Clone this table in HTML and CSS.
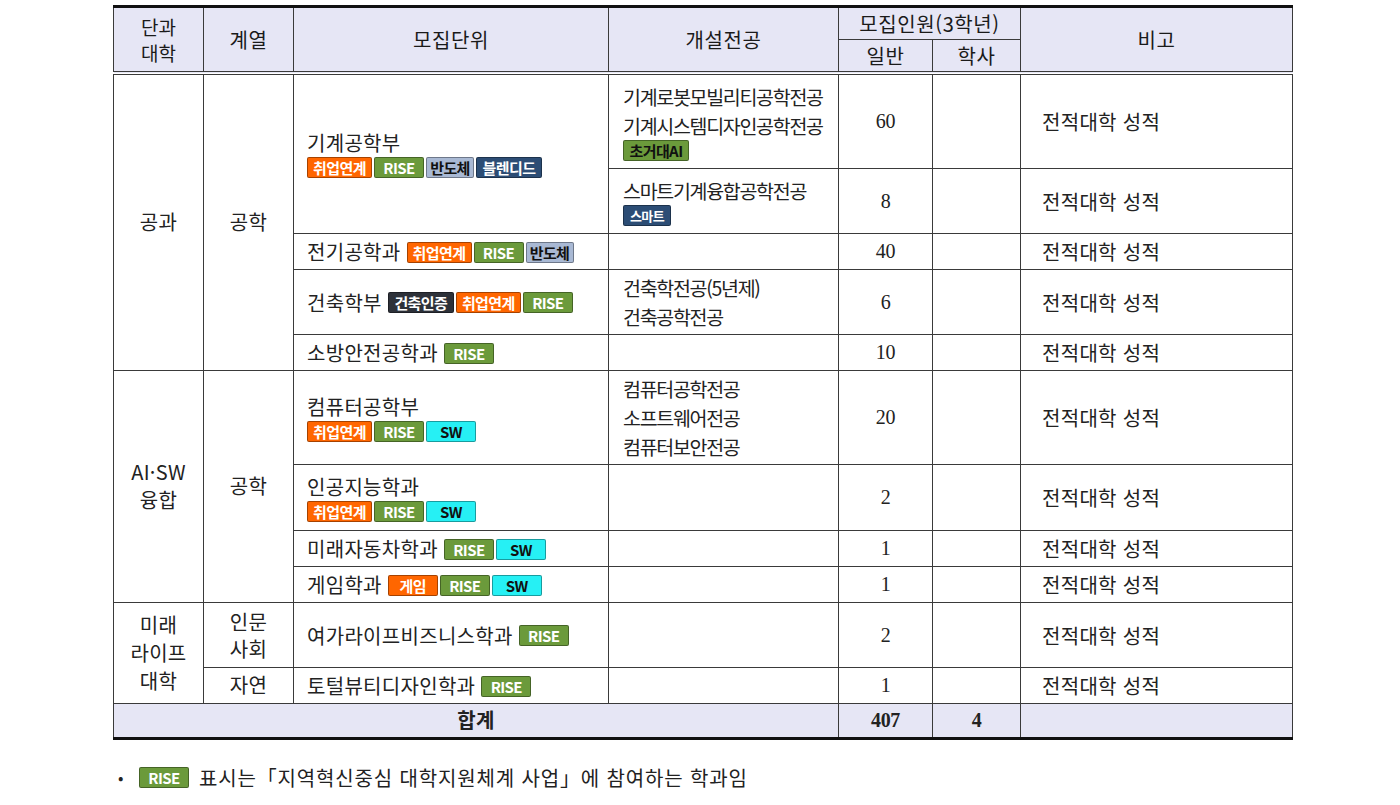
FILE: index.html
```html
<!DOCTYPE html>
<html lang="ko">
<head>
<meta charset="utf-8">
<title>모집단위</title>
<link rel="stylesheet" href="styles.css">
</head>
<body>
<div class="page">
<table class="grid">
  <colgroup>
    <col class="c-col"><col class="c-track"><col class="c-unit"><col class="c-major"><col class="c-gen"><col class="c-bach"><col class="c-note">
  </colgroup>
  <thead>
    <tr class="hr1">
      <th rowspan="2" class="two"><span class="ln">단과</span><span class="ln">대학</span></th>
      <th rowspan="2">계열</th>
      <th rowspan="2">모집단위</th>
      <th rowspan="2">개설전공</th>
      <th colspan="2" class="sub">모집인원(3학년)</th>
      <th rowspan="2">비고</th>
    </tr>
    <tr class="hr2">
      <th class="sub">일반</th>
      <th class="sub">학사</th>
    </tr>
  </thead>
  <tbody>
    <tr class="r95">
      <td rowspan="5">공과</td>
      <td rowspan="5">공학</td>
      <td rowspan="2" class="unit">
        <div class="name">기계공학부</div>
        <div class="badges"><span class="b orange w65">취업연계</span><span class="b green w50">RISE</span><span class="b gray w48">반도체</span><span class="b navy w66">블렌디드</span></div>
      </td>
      <td class="major">기계로봇모빌리티공학전공<br>기계시스템디자인공학전공
        <div class="badges"><span class="b green dark-text w66">초거대AI</span></div>
      </td>
      <td class="num">60</td>
      <td></td>
      <td class="note">전적대학 성적</td>
    </tr>
    <tr class="r65">
      <td class="major">스마트기계융합공학전공
        <div class="badges"><span class="b navy w48 small">스마트</span></div>
      </td>
      <td class="num">8</td>
      <td></td>
      <td class="note">전적대학 성적</td>
    </tr>
    <tr class="r36">
      <td class="unit"><span class="name">전기공학과</span><span class="b orange w65">취업연계</span><span class="b green w50">RISE</span><span class="b gray w48">반도체</span></td>
      <td class="major"></td>
      <td class="num">40</td>
      <td></td>
      <td class="note">전적대학 성적</td>
    </tr>
    <tr class="r65">
      <td class="unit"><span class="name">건축학부</span><span class="b charcoal w66">건축인증</span><span class="b orange w65">취업연계</span><span class="b green w50">RISE</span></td>
      <td class="major">건축학전공(5년제)<br>건축공학전공</td>
      <td class="num">6</td>
      <td></td>
      <td class="note">전적대학 성적</td>
    </tr>
    <tr class="r36">
      <td class="unit"><span class="name">소방안전공학과</span><span class="b green w50">RISE</span></td>
      <td class="major"></td>
      <td class="num">10</td>
      <td></td>
      <td class="note">전적대학 성적</td>
    </tr>
    <tr class="r94">
      <td rowspan="4">AI·SW<br>융합</td>
      <td rowspan="4">공학</td>
      <td class="unit">
        <div class="name">컴퓨터공학부</div>
        <div class="badges"><span class="b orange w65">취업연계</span><span class="b green w50">RISE</span><span class="b cyan w50">SW</span></div>
      </td>
      <td class="major">컴퓨터공학전공<br>소프트웨어전공<br>컴퓨터보안전공</td>
      <td class="num">20</td>
      <td></td>
      <td class="note">전적대학 성적</td>
    </tr>
    <tr class="r66">
      <td class="unit">
        <div class="name">인공지능학과</div>
        <div class="badges"><span class="b orange w65">취업연계</span><span class="b green w50">RISE</span><span class="b cyan w50">SW</span></div>
      </td>
      <td class="major"></td>
      <td class="num">2</td>
      <td></td>
      <td class="note">전적대학 성적</td>
    </tr>
    <tr class="r36">
      <td class="unit"><span class="name">미래자동차학과</span><span class="b green w50">RISE</span><span class="b cyan w50">SW</span></td>
      <td class="major"></td>
      <td class="num">1</td>
      <td></td>
      <td class="note">전적대학 성적</td>
    </tr>
    <tr class="r36">
      <td class="unit"><span class="name">게임학과</span><span class="b orange w50">게임</span><span class="b green w50">RISE</span><span class="b cyan w50">SW</span></td>
      <td class="major"></td>
      <td class="num">1</td>
      <td></td>
      <td class="note">전적대학 성적</td>
    </tr>
    <tr class="r65">
      <td rowspan="2">미래<br>라이프<br>대학</td>
      <td class="tight">인문<br>사회</td>
      <td class="unit"><span class="name">여가라이프비즈니스학과</span><span class="b green w50">RISE</span></td>
      <td class="major"></td>
      <td class="num">2</td>
      <td></td>
      <td class="note">전적대학 성적</td>
    </tr>
    <tr class="r36">
      <td>자연</td>
      <td class="unit"><span class="name">토털뷰티디자인학과</span><span class="b green w50">RISE</span></td>
      <td class="major"></td>
      <td class="num">1</td>
      <td></td>
      <td class="note">전적대학 성적</td>
    </tr>
    <tr class="total">
      <td colspan="4" class="bold">합계</td>
      <td class="num bold">407</td>
      <td class="num bold">4</td>
      <td></td>
    </tr>
  </tbody>
</table>

<div class="legend">
  <span class="dot">•</span>
  <span class="b green w50">RISE</span>
  <span class="legend-text">표시는「지역혁신중심 대학지원체계 사업」에 참여하는 학과임</span>
</div>
</div>
</body>
</html>
```

FILE: styles.css
```css
html, body {
  margin: 0;
  padding: 0;
  background: #ffffff;
}

body {
  font-family: "Noto Sans CJK KR", "Noto Sans", sans-serif;
  color: #222222;
}

.page {
  padding: 5px 0 0 113px;
}

.grid {
  border-collapse: collapse;
  table-layout: fixed;
  width: 1179px;
}

.c-col { width: 90px; }
.c-track { width: 90px; }
.c-unit { width: 315px; }
.c-major { width: 230px; }
.c-gen { width: 94px; }
.c-bach { width: 88px; }
.c-note { width: 272px; }

.grid th,
.grid td {
  border: 1px solid #3a3a3a;
  padding: 0;
  font-size: 20px;
  font-weight: normal;
  line-height: 28px;
  text-align: center;
  vertical-align: middle;
  letter-spacing: 0.3px;
}

.grid th {
  background: #e6e6f5;
  color: #1a1a1a;
  line-height: 25px;
  letter-spacing: 0.6px;
}

.grid th.two {
  font-size: 19px;
  letter-spacing: 0;
}

.ln {
  display: block;
  height: 26px;
  line-height: 26px;
}

.hr1 th {
  border-top: 3px solid #111111;
  height: 31px;
}

.hr2 th {
  height: 31px;
}

.grid thead tr:last-child th,
.grid thead th[rowspan="2"] {
  border-bottom: 4px double #3a3a3a;
}

.r95 { height: 95px; }
.r94 { height: 94px; }
.r65 { height: 65px; }
.r66 { height: 66px; }
.r36 { height: 36px; }

.grid td.unit {
  text-align: left;
  padding-left: 13px;
}

.grid td.major {
  text-align: left;
  padding-left: 14px;
  font-size: 19.5px;
  letter-spacing: -1.3px;
  line-height: 29px;
}

.grid td.note {
  text-align: left;
  padding-left: 21px;
  padding-top: 2px;
}

.grid td.num {
  font-family: "Liberation Serif", "DejaVu Serif", serif;
  font-size: 20px;
  letter-spacing: -0.3px;
}

.grid td.tight {
  line-height: 27px;
}

.total td {
  background: #e6e6f5;
  height: 33px;
  border-bottom: 3px solid #111111;
}

.grid td.bold {
  font-weight: bold;
}

.name {
  line-height: 28px;
}

span.name {
  margin-right: 6px;
  vertical-align: middle;
}

.badges {
  display: flex;
  gap: 2px;
  margin-top: 0;
}

.b {
  display: inline-flex;
  align-items: center;
  justify-content: center;
  box-sizing: border-box;
  height: 21px;
  border: 1px solid rgba(0, 0, 0, 0.35);
  border-radius: 2px;
  font-family: "Noto Sans CJK KR", "Noto Sans", sans-serif;
  font-size: 15px;
  font-weight: bold;
  line-height: 1;
  letter-spacing: -0.6px;
  color: #ffffff;
  vertical-align: middle;
}

.unit > .b + .b {
  margin-left: 2px;
}

.w48 { width: 48px; }
.w50 { width: 50px; }
.w65 { width: 65px; }
.w66 { width: 66px; }

.orange { background: #ff6600; }
.green { background: #6b9a3b; }
.gray { background: #a9b9d4; color: #111111; }
.navy { background: #2c4d75; }
.cyan { background: #26f0f4; color: #111111; }
.charcoal { background: #2d3139; }
.dark-text { color: #111111; }
.small { font-size: 13px; }

.legend {
  display: flex;
  align-items: center;
  margin-top: 23px;
  padding-left: 5px;
  font-size: 20px;
  color: #222222;
}

.dot {
  font-size: 16px;
  width: 21px;
}

.legend .b {
  margin-right: 10px;
}

.legend-text {
  letter-spacing: 0.85px;
}
```
